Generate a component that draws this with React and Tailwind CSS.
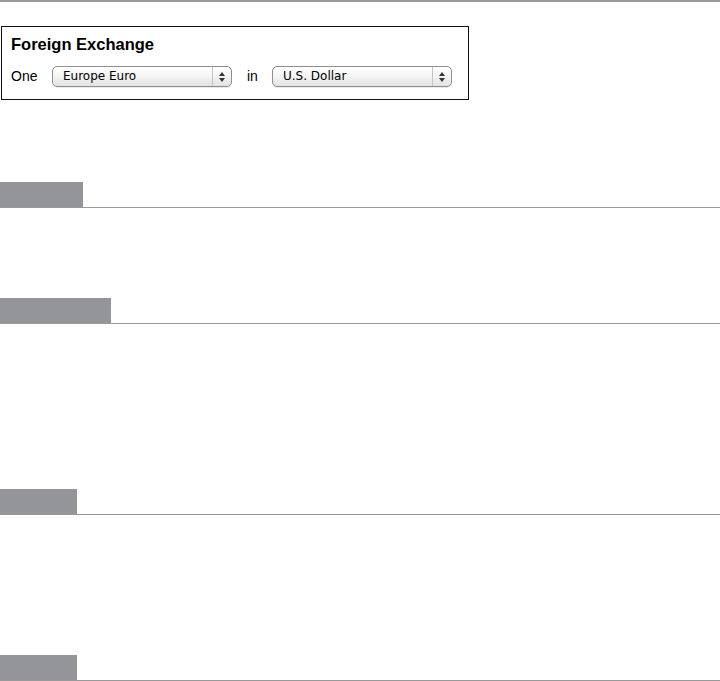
import React from 'react';

const SelectBox = ({ label, width }) => (
  <div
    className={`flex items-stretch h-[21px] ${width} rounded-[5px] border border-[#8e8e8e] bg-gradient-to-b from-white via-[#f4f4f4] to-[#e2e2e2] shadow-[0_1px_0_rgba(0,0,0,0.08)]`}
  >
    <span className="flex-1 pl-[10px] text-[12px] leading-[19px] text-black font-['DejaVu_Sans',sans-serif]">
      {label}
    </span>
    <span className="w-[19px] border-l border-[#c4c4c4] flex flex-col items-center justify-center gap-[2px]">
      <svg width="6" height="4" viewBox="0 0 6 4">
        <path d="M3 0 L6 4 L0 4 Z" fill="#333" />
      </svg>
      <svg width="6" height="4" viewBox="0 0 6 4">
        <path d="M0 0 L6 0 L3 4 Z" fill="#333" />
      </svg>
    </span>
  </div>
);

const SectionTab = ({ width }) => (
  <div className="border-b border-[#999999]">
    <div className={`h-[25px] ${width} bg-[#939598]`} />
  </div>
);

const App = () => {
  return (
    <div className="w-[720px] h-[681px] bg-white overflow-hidden font-['Liberation_Sans',Arial,sans-serif]">
      <div className="h-[2px] bg-[#999999]" />

      {/* Currency widget */}
      <div className="mt-[24px] ml-[1px] w-[468px] h-[74px] border border-[#111] pl-[9px] pt-[7px]">
        <h1 className="text-[16.5px] leading-[20px] font-bold text-black">Foreign Exchange</h1>
        <div className="mt-[12px] flex items-center h-[21px] text-[14px] text-black">
          <span className="w-[41px]">One</span>
          <SelectBox label="Europe Euro" width="w-[180px]" />
          <span className="ml-[15px] w-[25px]">in</span>
          <SelectBox label="U.S. Dollar" width="w-[180px]" />
        </div>
      </div>

      {/* Sections */}
      <div className="mt-[82px]">
        <SectionTab width="w-[83px]" />
        <div className="h-[90px]" />
        <SectionTab width="w-[111px]" />
        <div className="h-[165px]" />
        <SectionTab width="w-[77px]" />
        <div className="h-[140px]" />
        <SectionTab width="w-[77px]" />
      </div>
    </div>
  );
};

export default App;
